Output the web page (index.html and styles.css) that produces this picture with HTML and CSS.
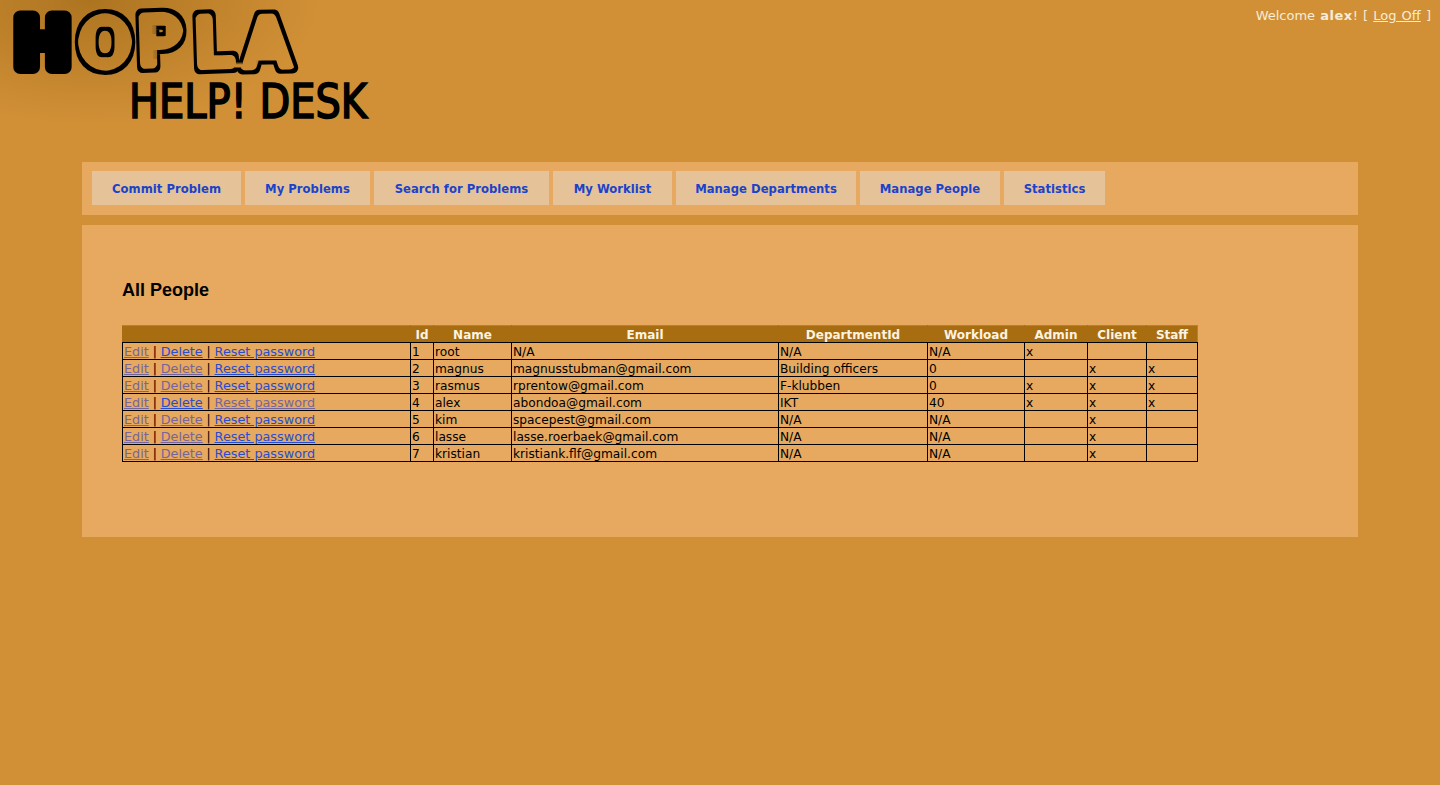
FILE: index.html
```html
<html>
    <head>
        <title>Hopla Help! Desk</title>
        <link rel="stylesheet" href="styles.css">
    </head>
    <body>
        <div class="header">
            <svg class="logo" width="380" height="130" viewBox="0 0 380 130">
                <defs>
                    <filter id="ring" x="-10%" y="-30%" width="120%" height="160%">
                        <feMorphology in="SourceAlpha" operator="erode" radius="3" result="inner"/>
                        <feComposite in="SourceGraphic" in2="inner" operator="out"/>
                    </filter>
                </defs>
                <text class="logo-solid" x="14" y="67">H</text>
                <g transform="scale(1.1 1.2)">
                    <text class="logo-big" filter="url(#ring)" x="70 124 176 220" y="57 56 57 57" rotate="0 -2 -2 -1">OPLA</text>
                </g>
                <g transform="translate(129 118) scale(1.01 1.1)">
                    <text class="logo-small">HELP! DESK</text>
                </g>
            </svg>
            <div class="welcome">Welcome <b>alex</b>! [ <a href="#">Log Off</a> ]</div>
        </div>
        <div class="menu">
            <a href="#">Commit Problem</a>
            <a href="#">My Problems</a>
            <a href="#">Search for Problems</a>
            <a href="#">My Worklist</a>
            <a href="#">Manage Departments</a>
            <a href="#">Manage People</a>
            <a href="#">Statistics</a>
        </div>
        <div class="main">
            <h2>All People</h2>
            <table>
                <colgroup>
                    <col class="c-actions"><col class="c-id"><col class="c-name"><col class="c-email"><col class="c-dept"><col class="c-load"><col class="c-admin"><col class="c-client"><col class="c-staff">
                </colgroup>
                <tr>
                    <th></th><th>Id</th><th>Name</th><th>Email</th><th>DepartmentId</th><th>Workload</th><th>Admin</th><th>Client</th><th>Staff</th>
                </tr>
                <tr>
                    <td><a class="seen" href="#">Edit</a> | <a href="#">Delete</a> | <a href="#">Reset password</a></td>
                    <td>1</td><td>root</td><td>N/A</td><td>N/A</td><td>N/A</td><td>x</td><td></td><td></td>
                </tr>
                <tr>
                    <td><a class="seen" href="#">Edit</a> | <a class="seen" href="#">Delete</a> | <a href="#">Reset password</a></td>
                    <td>2</td><td>magnus</td><td>magnusstubman@gmail.com</td><td>Building officers</td><td>0</td><td></td><td>x</td><td>x</td>
                </tr>
                <tr>
                    <td><a class="seen" href="#">Edit</a> | <a class="seen" href="#">Delete</a> | <a href="#">Reset password</a></td>
                    <td>3</td><td>rasmus</td><td>rprentow@gmail.com</td><td>F-klubben</td><td>0</td><td>x</td><td>x</td><td>x</td>
                </tr>
                <tr>
                    <td><a class="seen" href="#">Edit</a> | <a href="#">Delete</a> | <a class="seen" href="#">Reset password</a></td>
                    <td>4</td><td>alex</td><td>abondoa@gmail.com</td><td>IKT</td><td>40</td><td>x</td><td>x</td><td>x</td>
                </tr>
                <tr>
                    <td><a class="seen" href="#">Edit</a> | <a class="seen" href="#">Delete</a> | <a href="#">Reset password</a></td>
                    <td>5</td><td>kim</td><td>spacepest@gmail.com</td><td>N/A</td><td>N/A</td><td></td><td>x</td><td></td>
                </tr>
                <tr>
                    <td><a class="seen" href="#">Edit</a> | <a class="seen" href="#">Delete</a> | <a href="#">Reset password</a></td>
                    <td>6</td><td>lasse</td><td>lasse.roerbaek@gmail.com</td><td>N/A</td><td>N/A</td><td></td><td>x</td><td></td>
                </tr>
                <tr>
                    <td><a class="seen" href="#">Edit</a> | <a class="seen" href="#">Delete</a> | <a href="#">Reset password</a></td>
                    <td>7</td><td>kristian</td><td>kristiank.flf@gmail.com</td><td>N/A</td><td>N/A</td><td></td><td>x</td><td></td>
                </tr>
            </table>
        </div>
    </body>
</html>
```

FILE: styles.css
```css
body{
    margin: 0;
    height: 785px;
    overflow: hidden;
    background-color: #d19036;
    background-image: radial-gradient(ellipse 230px 125px at 90px 0, #ad7420 0%, #d19036 100%);
    background-repeat: no-repeat;
    font-family: "DejaVu Sans", Verdana, sans-serif;
    font-size: 13px;
    color: #000;
}
.header{
    height: 162px;
    display: flex;
    justify-content: space-between;
}
.logo{
    display: block;
}
.logo-solid, .logo-big{
    font-family: "DejaVu Sans", sans-serif;
    font-weight: bold;
    fill: #000;
    stroke: #000;
    stroke-linejoin: round;
}
.logo-solid{
    font-size: 68px;
    stroke-width: 14px;
}
.logo-big{
    font-size: 60px;
    stroke-width: 10px;
}
.logo-small{
    font-family: "DejaVu Sans Condensed", "DejaVu Sans", sans-serif;
    font-size: 44px;
    fill: #000;
    stroke: #000;
    stroke-width: 1.5px;
}
.welcome{
    padding: 8px 9px 0 0;
    color: #f8ecd8;
    line-height: 15px;
    word-spacing: 1px;
}
.welcome b{
    letter-spacing: 0.5px;
}
.welcome a{
    color: #f8ecd8;
}
.menu{
    margin: 0 82px 10px;
    padding: 9px 10px 10px;
    background: #e6a95f;
    display: grid;
    grid-template-columns: 149px 125px 175px 119px 180px 140px 101px;
    gap: 4px;
}
.menu a{
    height: 34px;
    line-height: 36px;
    text-align: center;
    background: #e5c298;
    color: #1a42cc;
    font-size: 11.6px;
    letter-spacing: 0.03px;
    font-weight: bold;
    text-decoration: none;
}
.main{
    margin: 0 82px;
    height: 312px;
    padding: 0 40px;
    background: #e6a95f;
    overflow: hidden;
}
h2{
    margin: 55px 0 25px;
    font-family: "Liberation Sans", Arial, sans-serif;
    font-size: 18px;
    line-height: 20px;
    font-weight: bold;
}
table{
    border-collapse: collapse;
    table-layout: fixed;
    width: 1076px;
    font-size: 12.2px;
}
th{
    height: 16px;
    padding: 2px 0 0;
    background: #a86d10;
    color: #fbf3e2;
    font-size: 12px;
    font-weight: bold;
    border: 1px solid #a86d10;
    border-top-color: #a9834a;
    border-bottom-color: #000;
    line-height: 14px;
}
th:last-child{
    border-right-color: #a9834a;
}
td{
    height: 16px;
    padding: 2px 1px 0;
    border: 1px solid #000;
    line-height: 14px;
    white-space: nowrap;
    overflow: hidden;
}
td a{
    color: #2a4ccf;
    font-size: 12.8px;
    line-height: 1;
}
td a.seen{
    color: #77659a;
}
.c-actions{ width: 288px; }
.c-id{ width: 23px; }
.c-name{ width: 78px; }
.c-email{ width: 267px; }
.c-dept{ width: 149px; }
.c-load{ width: 97px; }
.c-admin{ width: 63px; }
.c-client{ width: 59px; }
.c-staff{ width: 51px; }
```
